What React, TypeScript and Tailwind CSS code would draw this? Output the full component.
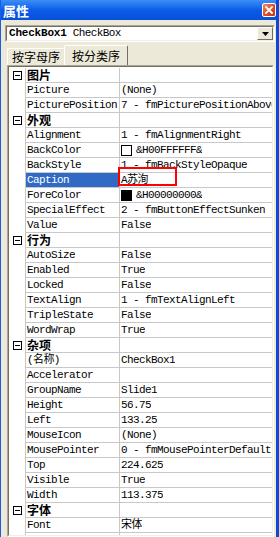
import React from 'react';

type Prop = {
  cat?: string;
  name?: string;
  value?: string;
  swatch?: 'white' | 'black';
  selected?: boolean;
  marked?: boolean;
};

const ROWS: Prop[] = [
  { cat: '图片' },
  { name: 'Picture', value: '(None)' },
  { name: 'PicturePosition', value: '7 - fmPicturePositionAboveCenter' },
  { cat: '外观' },
  { name: 'Alignment', value: '1 - fmAlignmentRight' },
  { name: 'BackColor', value: '&H00FFFFFF&', swatch: 'white' },
  { name: 'BackStyle', value: '1 - fmBackStyleOpaque' },
  { name: 'Caption', value: 'A苏洵', selected: true, marked: true },
  { name: 'ForeColor', value: '&H00000000&', swatch: 'black' },
  { name: 'SpecialEffect', value: '2 - fmButtonEffectSunken' },
  { name: 'Value', value: 'False' },
  { cat: '行为' },
  { name: 'AutoSize', value: 'False' },
  { name: 'Enabled', value: 'True' },
  { name: 'Locked', value: 'False' },
  { name: 'TextAlign', value: '1 - fmTextAlignLeft' },
  { name: 'TripleState', value: 'False' },
  { name: 'WordWrap', value: 'True' },
  { cat: '杂项' },
  { name: '(名称)', value: 'CheckBox1' },
  { name: 'Accelerator', value: '' },
  { name: 'GroupName', value: 'Slide1' },
  { name: 'Height', value: '56.75' },
  { name: 'Left', value: '133.25' },
  { name: 'MouseIcon', value: '(None)' },
  { name: 'MousePointer', value: '0 - fmMousePointerDefault' },
  { name: 'Top', value: '224.625' },
  { name: 'Visible', value: 'True' },
  { name: 'Width', value: '113.375' },
  { cat: '字体' },
  { name: 'Font', value: '宋体' },
  { name: '', value: '' },
];

const MONO = "font-['Liberation_Mono','Noto_Sans_CJK_SC',monospace] text-[11px] tracking-[-0.6px]";

const Minus = () => (
  <div className="w-[9px] h-[9px] border border-black bg-white flex items-center justify-center">
    <div className="w-[5px] h-px bg-black" />
  </div>
);

const GridRow: React.FC<{ row: Prop }> = ({ row }) => {
  if (row.cat) {
    return (
      <div className="flex h-[15px]">
        <div className="w-[17px] shrink-0 flex items-center justify-center border-r border-[#c8c8c8] bg-white">
          <Minus />
        </div>
        <div className="w-[94px] shrink-0 border-r border-b border-[#c8c8c8] pl-[1px] flex items-center font-['Noto_Sans_CJK_SC',sans-serif] text-[12px] font-bold leading-none text-black">
          {row.cat}
        </div>
        <div className="flex-1 border-b border-[#c8c8c8]" />
      </div>
    );
  }
  return (
    <div className="flex h-[15px]">
      <div className="w-[17px] shrink-0 border-r border-[#c8c8c8] bg-white" />
      <div className="w-[94px] shrink-0 border-r border-b border-[#c8c8c8] flex">
        <div
          className={`flex-1 flex items-center pl-[1px] whitespace-nowrap overflow-hidden ${MONO} ${
            row.selected ? 'bg-[#316ac5] text-white' : 'text-black'
          }`}
        >
          {row.name}
        </div>
      </div>
      <div className="relative flex-1 min-w-0 border-b border-[#c8c8c8] flex items-center pl-[1px] gap-[4px] overflow-visible">
        {row.swatch && (
          <div
            className={`w-[11px] h-[11px] shrink-0 border border-black ${
              row.swatch === 'white' ? 'bg-white' : 'bg-black'
            }`}
          />
        )}
        <span className={`whitespace-nowrap overflow-hidden text-black ${MONO}`}>{row.value}</span>
        {row.marked && (
          <div className="absolute left-[-2px] top-[-6px] w-[59px] h-[19px] border-2 border-[#ff0000]" />
        )}
      </div>
    </div>
  );
};

export default function App() {
  return (
    <div className="w-[279px] h-[537px] overflow-hidden flex flex-col bg-[#ece9d8] border-l border-l-[#1c5ce0] border-r-[3px] border-r-[#0a4ad6]">
      {/* Title bar */}
      <div className="h-[20px] shrink-0 -mr-[3px] -ml-px bg-gradient-to-b from-[#3d8df7] via-[#0a5ce9] to-[#0750d9] flex items-center justify-between pl-[3px] pr-[3px]">
        <span className="font-['Noto_Sans_CJK_SC',sans-serif] text-[13px] font-bold text-white leading-none">属性</span>
        <div className="w-[14px] h-[14px] rounded-[2px] border border-white bg-gradient-to-br from-[#f08a5f] via-[#e04f26] to-[#c1361a] flex items-center justify-center">
          <svg width="8" height="8" viewBox="0 0 8 8">
            <path d="M1 1 L7 7 M7 1 L1 7" stroke="white" strokeWidth="1.8" strokeLinecap="square" />
          </svg>
        </div>
      </div>

      {/* Object combo */}
      <div className="mt-[5px] ml-[4px] mr-[1px] h-[17px] shrink-0 flex border border-t-[#aca899] border-l-[#aca899] border-r-white border-b-white">
        <div className="flex-1 flex border border-t-[#716f64] border-l-[#716f64] border-r-[#f1efe2] border-b-[#f1efe2] bg-white">
          <div className="flex-1 flex items-center pl-[2px] gap-[6px] text-black whitespace-nowrap">
            <span className="font-['Liberation_Mono',monospace] text-[11px] font-bold tracking-[-0.2px]">CheckBox1</span>
            <span className={MONO}>CheckBox</span>
          </div>
          <div className="w-[16px] shrink-0 bg-[#ece9d8] border border-t-white border-l-white border-r-[#716f64] border-b-[#716f64] flex items-center justify-center">
            <svg width="7" height="4" viewBox="0 0 7 4">
              <path d="M0 0 H7 L3.5 4 Z" fill="black" />
            </svg>
          </div>
        </div>
      </div>

      {/* Tabs */}
      <div className="mt-[3px] ml-[6px] h-[20px] shrink-0 flex items-end">
        <div className="h-[17px] w-[58px] border-t border-l border-white border-r border-r-[#716f64] rounded-t-[2px] flex items-center justify-center font-['Noto_Sans_CJK_SC',sans-serif] text-[12px] leading-none text-black">
          按字母序
        </div>
        <div className="h-[20px] w-[64px] -ml-px border-t border-l border-white border-r border-r-[#716f64] rounded-t-[2px] bg-[#ece9d8] flex items-center justify-center font-['Noto_Sans_CJK_SC',sans-serif] text-[12px] leading-none text-black">
          按分类序
        </div>
      </div>

      {/* Property grid */}
      <div className="ml-[6px] mr-[2px] flex-1 min-h-0 border border-t-[#aca899] border-l-[#aca899] border-r-white border-b-white">
        <div className="h-full border border-t-[#716f64] border-l-[#716f64] border-r-[#f1efe2] border-b-[#f1efe2] bg-white pt-px overflow-hidden">
          {ROWS.map((r, i) => (
            <GridRow key={i} row={r} />
          ))}
        </div>
      </div>
    </div>
  );
}
